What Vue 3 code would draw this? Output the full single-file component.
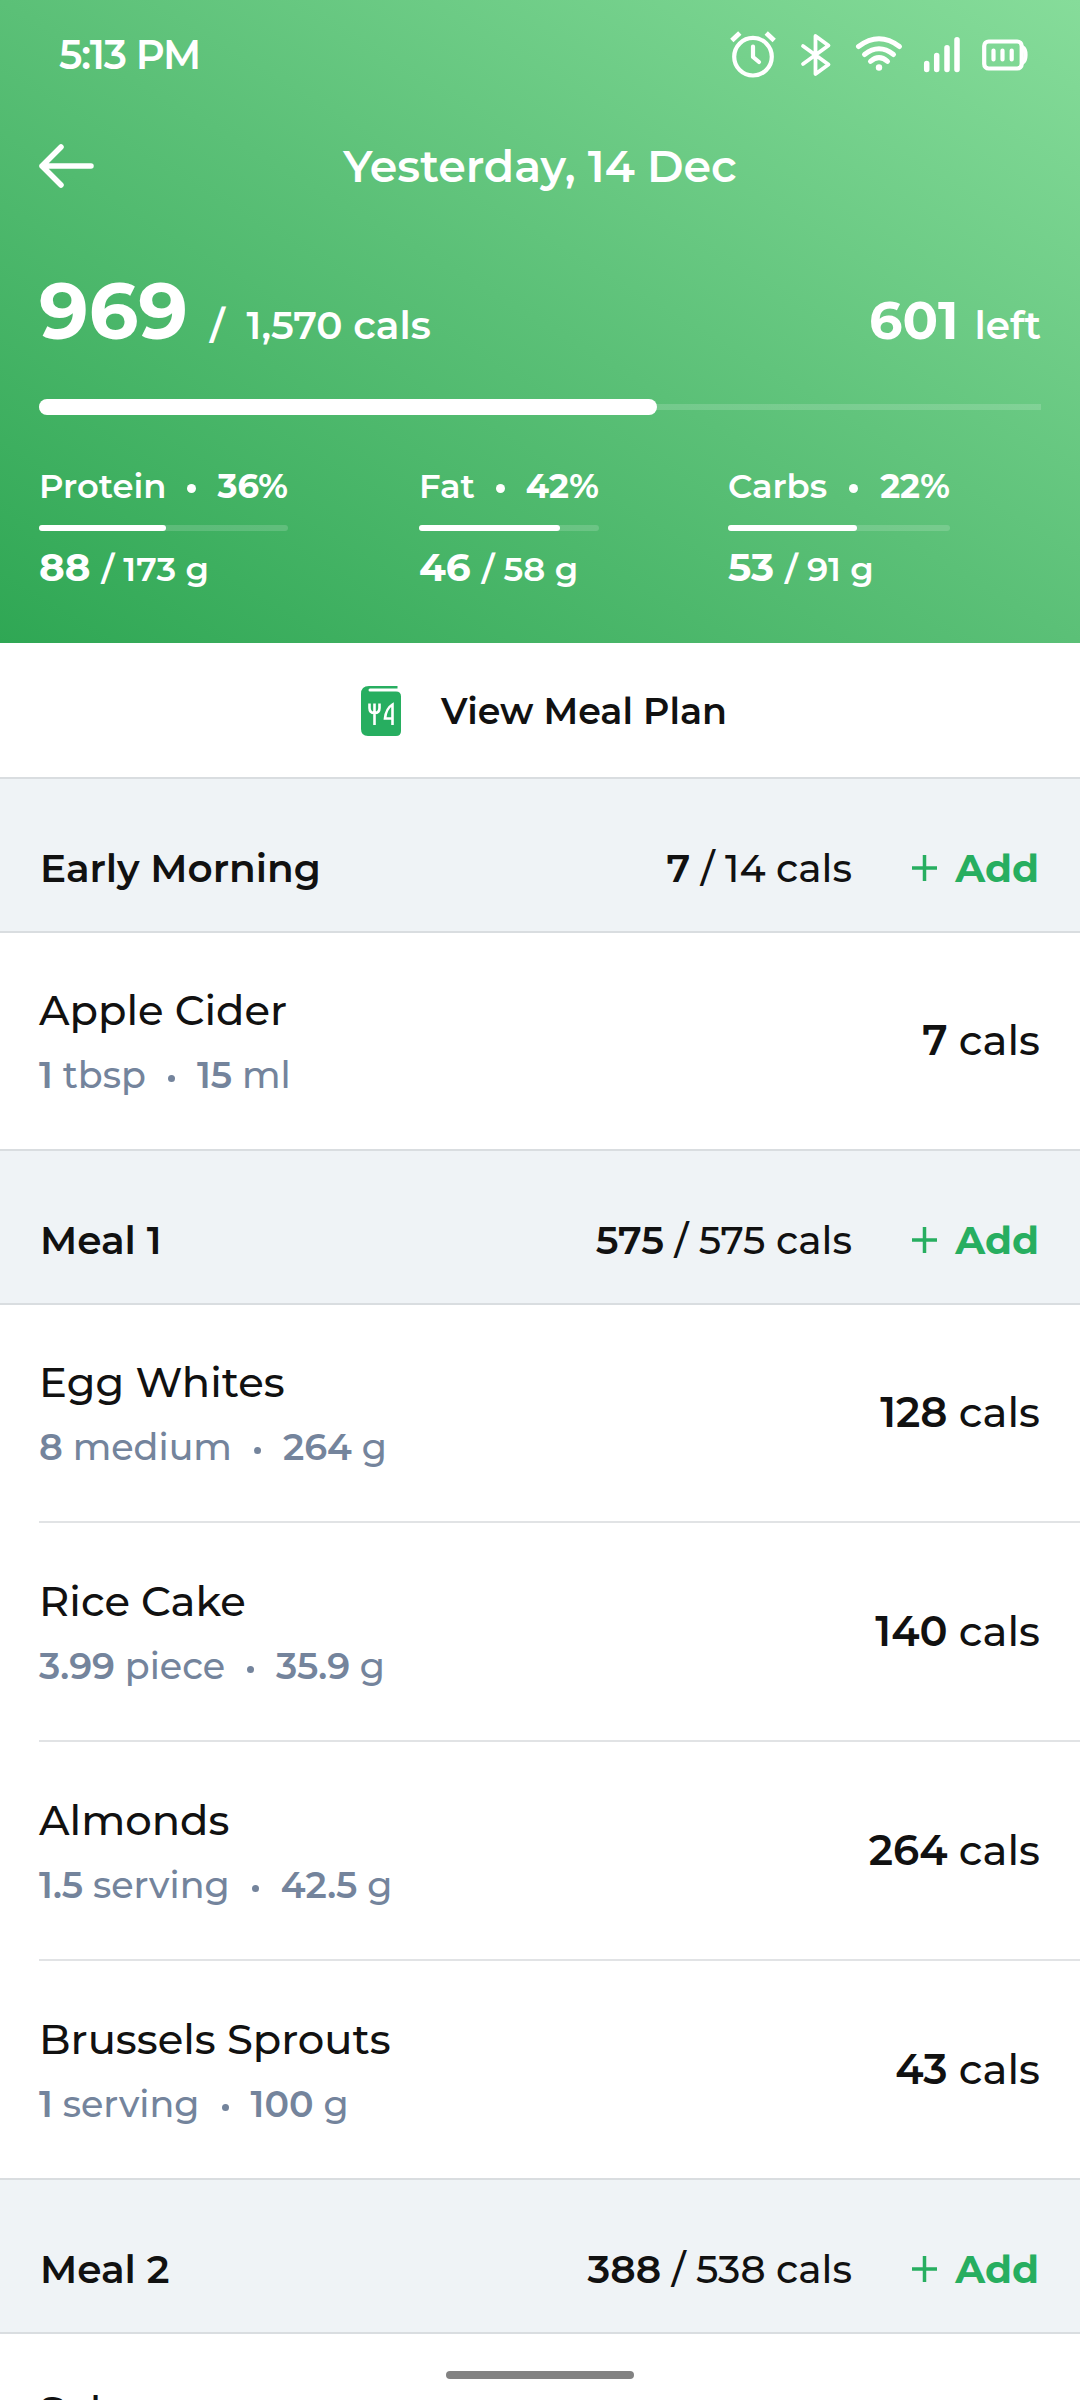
<script setup>
	import {
		ref,
		reactive
	} from 'vue'

	const eaten = ref(969)
	const goal = ref(1570)

	// fill 是进度条宽度（百分比）
	const macros = reactive([
		{ name: 'Protein', percent: 36, value: 88, total: 173, fill: 51 },
		{ name: 'Fat', percent: 42, value: 46, total: 58, fill: 78.2 },
		{ name: 'Carbs', percent: 22, value: 53, total: 91, fill: 58.2 }
	])

	const meals = reactive([
		{
			name: 'Early Morning', value: 7, total: 14,
			foods: [
				{ name: 'Apple Cider', count: '1', unit: 'tbsp', amount: '15', measure: 'ml', cals: 7 }
			]
		},
		{
			name: 'Meal 1', value: 575, total: 575,
			foods: [
				{ name: 'Egg Whites', count: '8', unit: 'medium', amount: '264', measure: 'g', cals: 128 },
				{ name: 'Rice Cake', count: '3.99', unit: 'piece', amount: '35.9', measure: 'g', cals: 140 },
				{ name: 'Almonds', count: '1.5', unit: 'serving', amount: '42.5', measure: 'g', cals: 264 },
				{ name: 'Brussels Sprouts', count: '1', unit: 'serving', amount: '100', measure: 'g', cals: 43 }
			]
		},
		{
			name: 'Meal 2', value: 388, total: 538,
			foods: [
				{ name: 'Salmon' }
			]
		}
	])
</script>

<template>
	<div class="page">
		<div class="top">
			<div class="status">
				<div class="time">5:13 PM</div>
				<svg class="status-icons" width="300" height="52" viewBox="0 0 300 52" fill="none" stroke="#fff" stroke-width="4.2" stroke-linecap="round" stroke-linejoin="round">
					<!-- alarm -->
					<circle cx="24" cy="29.700" r="18.800" />
					<path d="M24 19.500v10.500l6 5" />
					<path d="M2.800 13.500l8-7.500M45.200 13.500l-8-7.500" stroke-linecap="butt" stroke-width="4.800" />
					<!-- bluetooth -->
					<path d="M74 19l25.500 18.500-13 9.500V9l13 9.500L74 37" stroke-width="3.800" />
					<!-- wifi -->
					<path d="M129.500 19.500Q150 4 170.500 19.500M135.500 27.500Q150 16 164.500 27.500M141.500 34.300Q150 27 158.500 34.300" stroke-width="5" />
					<circle cx="150" cy="40.500" r="3.200" fill="#fff" stroke="none" />
					<!-- signal -->
					<path d="M197.700 36.500v6M207.700 28.500v14M218 20.700v21.800M228 12.700v29.800" stroke-width="5.500" />
					<!-- battery -->
					<rect x="255.200" y="14.500" width="37.500" height="27" rx="4.500" />
					<path d="M293.500 20.500q3 1.500 3 7.500t-3 7.500" />
					<path d="M264.500 23.500v9M273.500 23.500v9M282.700 23.500v9" />
				</svg>
			</div>

			<div class="nav">
				<svg class="back" width="56" height="46" viewBox="0 0 56 46" fill="none" stroke="#fff" stroke-width="5.500" stroke-linecap="round" stroke-linejoin="round">
					<path d="M52 23H3M22 4L3 23l19 19" />
				</svg>
				<div class="date">Yesterday, 14 Dec</div>
			</div>

			<div class="summary">
				<div class="row"><span class="eaten">{{eaten}}</span><span class="slash">/</span><span class="goal">{{goal.toLocaleString('en-US')}} cals</span></div>
				<div class="row"><span class="left-num">{{goal - eaten}}</span><span class="left-text">left</span></div>
			</div>

			<div class="bar">
				<div class="bar-fill" :style="{ width: eaten / goal * 100 + '%' }"></div>
			</div>

			<div class="macros">
				<div class="macro" :class="item.name.toLowerCase()" v-for="item in macros" :key="item.name">
					<div class="macro-top"><span>{{item.name}}</span><i class="dot"></i><b>{{item.percent}}%</b></div>
					<div class="macro-bar">
						<div class="macro-fill" :style="{ width: item.fill + '%' }"></div>
					</div>
					<div class="macro-num"><b>{{item.value}}</b><span>/ {{item.total}} g</span></div>
				</div>
			</div>
		</div>

		<div class="plan">
			<svg width="40" height="50" viewBox="0 0 40 50">
				<path d="M8 0H36.500V2.500H9a1.500 1.500 0 0 0 0 3H35q5 0 5 5V45q0 5-5 5H7q-7 0-7-7V8Q0 0 8 0z" fill="#27ae60" />
				<path d="M8.500 17.500v4.500q0 5 5 5t5-5v-4.500M13.500 17.500v21.500M31.500 39V18.500q-6.500 4-7.500 14h7.500" fill="none" stroke="#fff" stroke-width="2.600" />
			</svg>
			<span>View Meal Plan</span>
		</div>

		<div class="meal" v-for="meal in meals" :key="meal.name">
			<div class="meal-head">
				<div class="meal-name">{{meal.name}}</div>
				<div class="meal-cals"><b>{{meal.value}}</b> / {{meal.total}} cals</div>
				<div class="add">
					<svg width="25" height="26" viewBox="0 0 25 26" stroke="#27ae60" stroke-width="3.500">
						<path d="M12.500 0v26M0 13h25" />
					</svg>
					<span>Add</span>
				</div>
			</div>
			<div class="food" v-for="food in meal.foods" :key="food.name">
				<div>
					<div class="food-name">{{food.name}}</div>
					<div class="food-info" v-if="food.cals"><b>{{food.count}}</b> {{food.unit}}<i class="dot small"></i><b>{{food.amount}}</b> {{food.measure}}</div>
				</div>
				<div class="food-cals" v-if="food.cals"><b>{{food.cals}}</b> cals</div>
			</div>
		</div>

		<div class="home-bar"></div>
	</div>
</template>

<style>
	body {
		margin: 0;
		overflow: hidden;
	}
</style>

<style scoped>
	.page {
		width: 1080px;
		height: 2400px;
		position: relative;
		overflow: hidden;
		background-color: #fff;
		color: #111;
		font-family: Montserrat, Inter, sans-serif;
		font-weight: 500;
	}

	.page * {
		box-sizing: border-box;
	}

	b {
		font-weight: 600;
	}

	svg {
		display: block;
		flex: none;
	}

	.top {
		height: 643px;
		padding: 0 39px;
		color: #fff;
		font-weight: 600;
		background: linear-gradient(to top right, #2fa754 0%, #5bc077 50%, #86dc9a 100%);
	}

	.top b {
		font-weight: 700;
	}

	.status {
		height: 110px;
		display: flex;
		justify-content: space-between;
		align-items: center;
		padding: 0 12px 0 20px;
	}

	.time {
		font-size: 40px;
		line-height: 110px;
		letter-spacing: -1.2px;
	}

	.status-icons {
		margin-bottom: 4px;
	}

	.nav {
		height: 112px;
		display: flex;
		align-items: center;
	}

	.date {
		flex: 1;
		text-align: center;
		padding: 0 56px 0 0;
		font-size: 44.3px;
	}

	.summary {
		height: 133px;
		display: flex;
		justify-content: space-between;
		align-items: flex-end;
		line-height: 60px;
	}

	.row {
		display: flex;
		align-items: baseline;
	}

	.eaten {
		font-size: 78px;
		font-weight: 700;
	}

	.slash {
		font-size: 39px;
		margin: 0 22px 0 22px;
	}

	.goal {
		font-size: 39px;
	}

	.left-num {
		font-size: 52.5px;
		font-weight: 700;
		margin-right: 16px;
	}

	.left-text {
		font-size: 39px;
	}

	.bar {
		height: 16px;
		margin-top: 44px;
		background: linear-gradient(rgba(255, 255, 255, 0.16), rgba(255, 255, 255, 0.16)) center / 100% 6px no-repeat;
	}

	.bar-fill {
		height: 16px;
		border-radius: 8px;
		background-color: #fff;
	}

	.macros {
		display: flex;
		margin-top: 49px;
	}

	.macro {
		width: 249px;
	}

	.fat {
		width: 180px;
		margin-left: 131px;
	}

	.carbs {
		width: 222px;
		margin-left: 129px;
	}

	.macro-top {
		display: flex;
		align-items: center;
		justify-content: space-between;
		font-size: 33.8px;
		line-height: 44px;
	}

	.dot {
		display: inline-block;
		width: 9px;
		height: 9px;
		margin-top: 4px;
		border-radius: 50%;
		background-color: currentColor;
	}

	.macro-bar {
		height: 6px;
		margin-top: 17px;
		border-radius: 3px;
		background-color: rgba(255, 255, 255, 0.16);
	}

	.macro-fill {
		height: 6px;
		border-radius: 3px;
		background-color: #fff;
	}

	.macro-num {
		margin-top: 11px;
		font-size: 33.8px;
		line-height: 50px;
	}

	.macro-num b {
		font-size: 39px;
		margin-right: 11px;
	}

	.plan {
		height: 134px;
		display: flex;
		align-items: center;
		justify-content: center;
		gap: 40px;
		padding: 1px 0 0 8px;
		font-size: 36.4px;
		font-weight: 600;
	}

	.meal-head {
		height: 155.5px;
		padding: 26px 41px 0 40px;
		display: flex;
		align-items: center;
		background-color: #eff3f6;
		border-top: 2px solid #d9dde0;
		border-bottom: 2px solid #d9dde0;
		font-size: 39px;
	}

	.meal-name {
		flex: 1;
		font-weight: 600;
	}

	.add {
		width: 127px;
		margin-left: 60px;
		display: flex;
		align-items: center;
		justify-content: space-between;
		color: #27ae60;
		font-weight: 700;
	}

	.food {
		height: 216.5px;
		margin-left: 39px;
		padding: 50px 40px 0 0;
		display: flex;
		justify-content: space-between;
		font-size: 41.7px;
		line-height: 54px;
	}

	.food + .food {
		height: 219px;
		padding-top: 51px;
		border-top: 2px solid #e1e3e5;
	}

	.food-info {
		margin-top: 11px;
		font-size: 36.5px;
		color: #74849c;
	}

	.dot.small {
		width: 7px;
		height: 7px;
		margin: 0 22px;
		vertical-align: 6px;
	}

	.food-cals {
		margin-top: 30px;
	}

	.home-bar {
		position: absolute;
		left: 446px;
		bottom: 21px;
		width: 188px;
		height: 8px;
		border-radius: 4px;
		background-color: #828282;
	}
</style>
